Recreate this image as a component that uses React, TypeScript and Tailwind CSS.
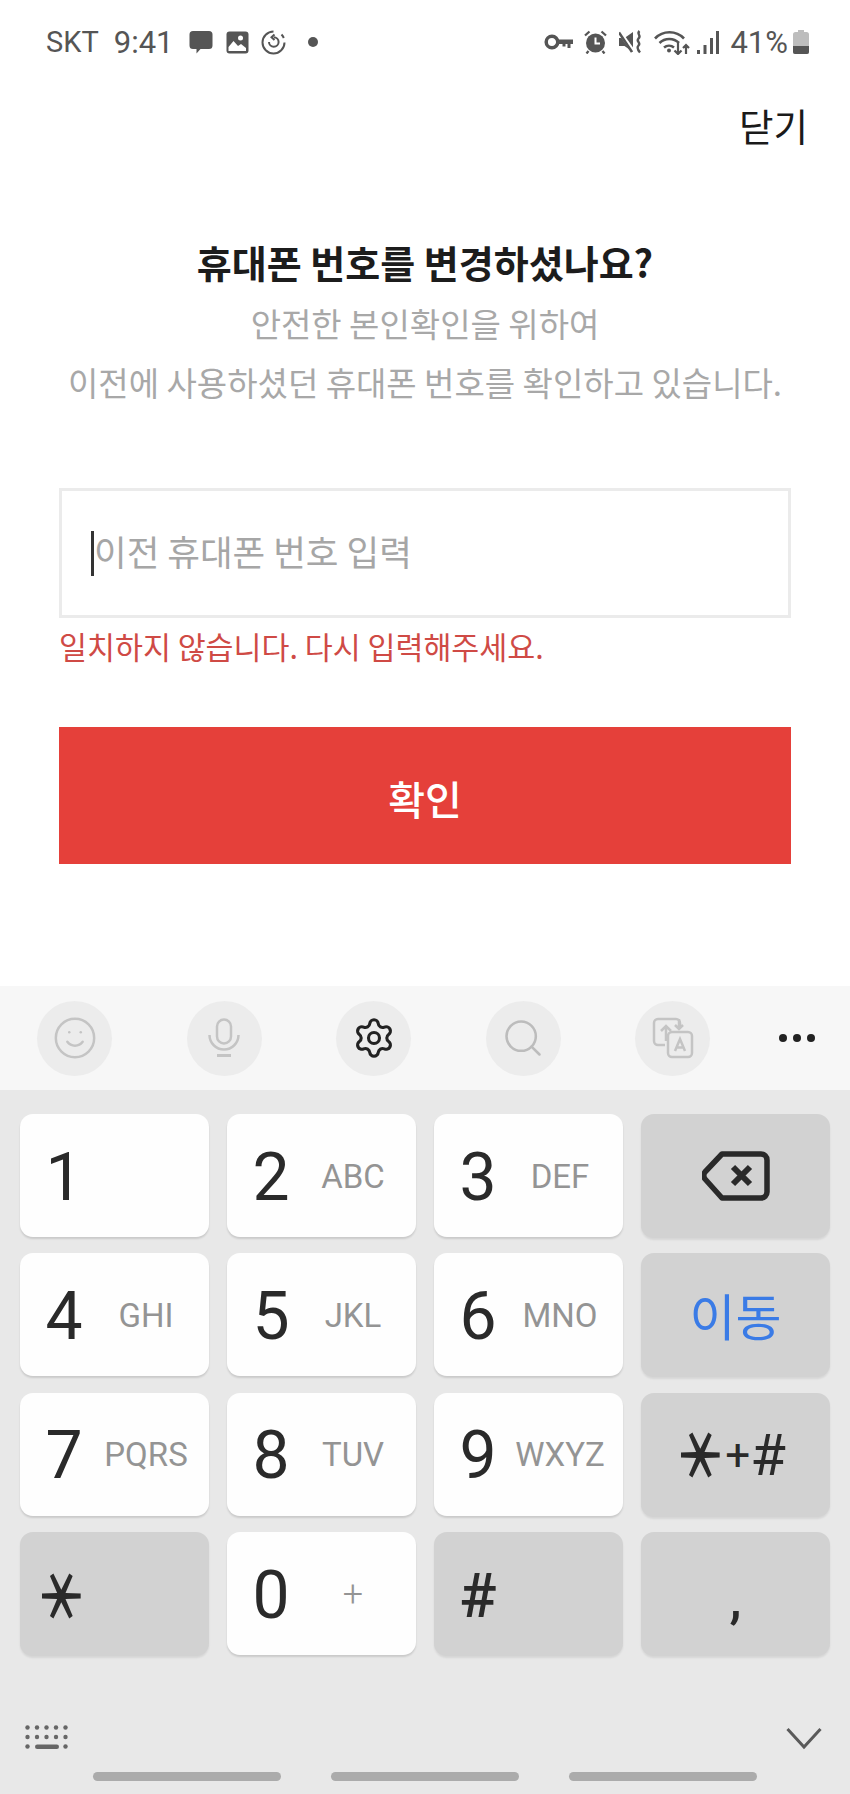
import React from "react";
import { Settings, Search, Smile } from "lucide-react";

const kr = "font-['Noto_Sans_CJK_KR','Noto_Sans',sans-serif]";
const rb = "font-['Roboto','Noto_Sans_CJK_KR',sans-serif]";

function Digit({ d, l, n }: { d: string; l?: string; n?: boolean }) {
  return (
    <div className="flex h-[123px] items-center rounded-[13px] bg-[#fefefe] shadow-[0_2px_2px_rgba(0,0,0,0.13)]">
      <span className={`mt-[4px] w-[88px] text-center text-[66px] font-normal leading-none text-[#2a2a2a] ${rb}`}>{d}</span>
      {l && (
        <span className={`mt-[1px] flex w-[76px] justify-center whitespace-nowrap ${n ? "text-[36px] font-light" : "text-[33px]"} leading-none text-[#949494] ${rb}`}>
          {l}
        </span>
      )}
    </div>
  );
}

function Fn({ children, className = "" }: { children: React.ReactNode; className?: string }) {
  return (
    <div className={`flex h-[124px] items-center rounded-[13px] bg-[#d2d2d2] shadow-[0_2px_2px_rgba(0,0,0,0.08)] ${className}`}>
      {children}
    </div>
  );
}

function Star() {
  return <span className="inline-block rotate-90 scale-x-[1.45] scale-y-[1.14] text-[44px] font-bold leading-none">＊</span>;
}

function ToolBtn({ children }: { children: React.ReactNode }) {
  return <div className="flex h-[75px] w-[75px] items-center justify-center rounded-full bg-[#ececec]">{children}</div>;
}

export default function App() {
  return (
    <div className={`flex h-[1794px] w-[850px] flex-col overflow-hidden bg-white ${kr}`}>
      {/* status bar */}
      <div className={`flex h-[80px] items-start justify-between pl-[46px] pr-[41px] pt-[25px] text-[#555] ${rb}`}>
        <div className="flex h-[34px] items-center">
          <span className="text-[29px] leading-none">SKT</span>
          <span className="ml-[15px] text-[31px] leading-none">9:41</span>
          <svg className="ml-[15px]" width="24" height="24" viewBox="0 0 24 24" fill="#555">
            <path d="M4 1h16a3.500 3.500 0 0 1 3.500 3.500v11A3.500 3.500 0 0 1 20 19h-8.500L7.500 23.500V19H4a3.500 3.500 0 0 1-3.500-3.500v-11A3.500 3.500 0 0 1 4 1z" />
          </svg>
          <svg className="ml-[13px]" width="23" height="23" viewBox="0 0 23 23">
            <rect x="0.500" y="0.500" width="22" height="22" rx="3" fill="#555" />
            <circle cx="14.500" cy="7" r="2.500" fill="#fff" />
            <path d="M2.500 20v-4l5-6 4.500 5 3-2 5 4v3z" fill="#fff" />
          </svg>
          <svg className="ml-[12px]" width="25" height="25" viewBox="0 0 25 25" fill="none" stroke="#555" strokeWidth="2">
            <path d="M12.500 1.500a11 11 0 1 0 11 11" />
            <path d="M20.500 4.500a11 11 0 0 1 2.300 3.500" />
            <path d="M8 12a4.800 4.800 0 1 0 4.800-4.800" />
            <path d="M13.500 4.500l-3 2.800 3 2.800" strokeWidth="2" />
          </svg>
          <span className="ml-[22px] h-[10px] w-[10px] rounded-full bg-[#555]" />
        </div>
        <div className="flex h-[34px] items-center">
          <svg width="29" height="16" viewBox="0 0 29 16" fill="none">
            <circle cx="8" cy="8" r="5.800" stroke="#555" strokeWidth="3.500" />
            <path d="M13 5.500h16v4.500h-2.500v4h-3v-4h-2v2.500h-3v-2.500H13z" fill="#555" />
          </svg>
          <svg className="ml-[11px]" width="23" height="24" viewBox="0 0 23 24">
            <circle cx="11.500" cy="13" r="9.500" fill="#555" />
            <path d="M11.500 7.500v6h4.500" stroke="#fff" strokeWidth="2" fill="none" />
            <path d="M1 5.500L5.500 1.500M22 5.500L17.500 1.500M4.500 21l-2 2.500M18.500 21l2 2.500" stroke="#555" strokeWidth="2.300" />
          </svg>
          <svg className="ml-[12px]" width="24" height="24" viewBox="0 0 24 24" fill="none">
            <path d="M0 8H5.500L14 2v20L5.500 16H0z" fill="#555" />
            <path d="M0 1L14 21" stroke="#fff" strokeWidth="4" />
            <path d="M0 2.500L13 22" stroke="#555" strokeWidth="2.500" />
            <path d="M20.500 1c-3.500 3 2.500 4.500 -1 7.500c-3 3 3 4 0 7c-2 2 -1 4 1.500 7" stroke="#555" strokeWidth="2.400" />
          </svg>
          <svg className="ml-[11px]" width="36" height="26" viewBox="0 0 36 26" fill="none" stroke="#555">
            <path d="M1 9.500a20 20 0 0 1 29 0" strokeWidth="2.600" />
            <path d="M5.500 14a14 14 0 0 1 19.500 0" strokeWidth="2.600" />
            <path d="M10 18.500a8 8 0 0 1 10 0" strokeWidth="2.600" />
            <circle cx="15" cy="21.500" r="2" fill="#555" stroke="none" />
            <path d="M24 14v11M20.500 21.500l3.500 3.500 3.500-3.500M32 25v-9M29 19l3-3 3 3" strokeWidth="2.200" />
          </svg>
          <svg className="ml-[7px]" width="22" height="24" viewBox="0 0 22 24" fill="#555">
            <rect x="0" y="20" width="3" height="4" />
            <rect x="6.500" y="15" width="3" height="9" />
            <rect x="13" y="8" width="3" height="16" />
            <rect x="19" y="1" width="3" height="23" />
          </svg>
          <span className="ml-[11px] text-[31px] leading-none">41%</span>
          <svg className="ml-[5px]" width="16" height="24" viewBox="0 0 16 24">
            <path d="M5 0h6v2h2.500A2.500 2.500 0 0 1 16 4.500V22a2 2 0 0 1-2 2H2a2 2 0 0 1-2-2V4.500A2.500 2.500 0 0 1 2.500 2H5z" fill="#bdbdbd" />
            <path d="M0 16h16v6a2 2 0 0 1-2 2H2a2 2 0 0 1-2-2z" fill="#555" />
          </svg>
        </div>
      </div>

      {/* close */}
      <div className="flex h-[94px] items-center justify-end pb-[5px] pl-0 pr-[42px]">
        <span className="text-[37.500px] leading-none text-[#1a1a1a]">닫기</span>
      </div>

      {/* main */}
      <div className="flex flex-1 flex-col px-[59px]">
        <h1 className="mt-[58px] whitespace-nowrap text-center text-[38px] font-bold leading-[60px] text-[#1c1c1c]">휴대폰 번호를 변경하셨나요?</h1>
        <p className="mt-[2px] text-center text-[33px] leading-[58px] text-[#a8a8a8]">안전한 본인확인을 위하여</p>
        <p className="-mx-[10px] mt-[1px] whitespace-nowrap text-center text-[33px] leading-[58px] text-[#a8a8a8]">이전에 사용하셨던 휴대폰 번호를 확인하고 있습니다.</p>
        <div className="mt-[77px] flex h-[130px] items-center border-[3px] border-[#ebebeb] pl-[29px]">
          <span className="h-[45px] w-[3px] bg-[#333]" />
          <span className="-mt-[4px] text-[35.500px] leading-none text-[#a6a6a6]">이전 휴대폰 번호 입력</span>
        </div>
        <p className="mt-[8px] text-[30.400px] leading-[40px] text-[#cf4a45]">일치하지 않습니다. 다시 입력해주세요.</p>
        <button className="mt-[61px] flex h-[137px] items-center justify-center bg-[#e5403a] pt-[5px] text-[40px] font-medium leading-none text-white">
          확인
        </button>
      </div>

      {/* toolbar */}
      <div className="flex h-[104px] items-center bg-[#f7f7f7] pl-[37px]">
        <div className="flex gap-[74.500px]">
          <ToolBtn>
            <Smile size={46} strokeWidth={1.300} color="#c4c4c4" />
          </ToolBtn>
          <ToolBtn>
            <svg width="32" height="40" viewBox="0 0 32 40" fill="none" stroke="#c4c4c4" strokeWidth="2.500">
              <rect x="9" y="1.500" width="14" height="24" rx="7" />
              <path d="M1.500 17a14.500 14.500 0 0 0 29 0" />
              <path d="M9 37.500h14" strokeWidth="3" />
            </svg>
          </ToolBtn>
          <ToolBtn>
            <Settings size={44} strokeWidth={1.700} color="#222" />
          </ToolBtn>
          <ToolBtn>
            <Search size={44} strokeWidth={1.400} color="#bcbcbc" />
          </ToolBtn>
          <ToolBtn>
            <svg width="42" height="42" viewBox="0 0 42 42" fill="none" stroke="#c4c4c4" strokeWidth="2.500">
              <path d="M13 28H6a4 4 0 0 1-4-4V6a4 4 0 0 1 4-4h18a4 4 0 0 1 4 4v3" />
              <rect x="16" y="15" width="24" height="25" rx="4" />
              <path d="M23 34l5-12 5 12M24.500 30.500h7" />
              <path d="M14 24V9M9 14l5-5 5 5" />
              <path d="M27 2v9M23 8l4 4 4-4" />
            </svg>
          </ToolBtn>
        </div>
        <div className="ml-[69px] flex gap-[6px]">
          <span className="h-[8px] w-[8px] rounded-full bg-[#222]" />
          <span className="h-[8px] w-[8px] rounded-full bg-[#222]" />
          <span className="h-[8px] w-[8px] rounded-full bg-[#222]" />
        </div>
      </div>

      {/* keyboard */}
      <div className="flex h-[704px] flex-col bg-[#e8e8e8]">
        <div className="mt-[24px] grid grid-cols-4 gap-x-[18px] gap-y-[15.400px] px-[20px]">
          <Digit d="1" />
          <Digit d="2" l="ABC" />
          <Digit d="3" l="DEF" />
          <Fn className="justify-center">
            <svg width="68" height="50" viewBox="0 0 68 50" fill="none" stroke="#2a2a2a" strokeWidth="5.500" strokeLinejoin="round">
              <path d="M20 3h39a6 6 0 0 1 6 6v32a6 6 0 0 1-6 6H20L3 28a6 6 0 0 1 0-7z" />
              <path d="M31 16l17 17M48 16L31 33" strokeWidth="6" />
            </svg>
          </Fn>
          <Digit d="4" l="GHI" />
          <Digit d="5" l="JKL" />
          <Digit d="6" l="MNO" />
          <Fn className="justify-center">
            <span className="-mt-[2px] text-[50px] leading-none text-[#3a7be6]">이동</span>
          </Fn>
          <Digit d="7" l="PQRS" />
          <Digit d="8" l="TUV" />
          <Digit d="9" l="WXYZ" />
          <Fn className="justify-center pr-[4px] leading-none text-[#2a2a2a]">
            <Star />
            <span className={`text-[44px] ${rb}`}>+</span>
            <span className={`text-[58px] ${rb}`}>#</span>
          </Fn>
          <Fn>
            <span className="mt-[4px] flex w-[88px] justify-center leading-none text-[#2a2a2a]">
              <Star />
            </span>
          </Fn>
          <Digit d="0" l="+" n />
          <Fn>
            <span className={`mt-[4px] w-[88px] text-center text-[62px] font-medium leading-none text-[#2a2a2a] ${rb}`}>#</span>
          </Fn>
          <Fn className="justify-center">
            <span className={`mt-[10px] text-[54px] font-medium leading-none text-[#2a2a2a] ${rb}`}>,</span>
          </Fn>
        </div>

        <div className="mt-[69px] flex h-[26px] items-center justify-between pl-[25px] pr-[28px]">
          <svg width="44" height="26" viewBox="0 0 44 26" fill="#666">
            {[2.500, 12, 21.500, 31, 40.500].map((x) => (
              <circle key={`a${x}`} cx={x} cy="2.500" r="2.200" />
            ))}
            {[2.500, 12, 21.500, 31, 40.500].map((x) => (
              <circle key={`b${x}`} cx={x} cy="12" r="2.200" />
            ))}
            <circle cx="2.500" cy="21.500" r="2.200" />
            <rect x="10" y="19.500" width="24" height="4.500" rx="2.200" />
            <circle cx="40.500" cy="21.500" r="2.200" />
          </svg>
          <svg width="36" height="23" viewBox="0 0 36 23" fill="none" stroke="#5a5a5a" strokeWidth="3">
            <path d="M1.500 2L18 20 34.500 2" />
          </svg>
        </div>

        <div className="mt-[21px] flex gap-[50px] pl-[93px]">
          <span className="h-[9px] w-[188px] rounded-full bg-[#ababab]" />
          <span className="h-[9px] w-[188px] rounded-full bg-[#ababab]" />
          <span className="h-[9px] w-[188px] rounded-full bg-[#ababab]" />
        </div>
      </div>
    </div>
  );
}
